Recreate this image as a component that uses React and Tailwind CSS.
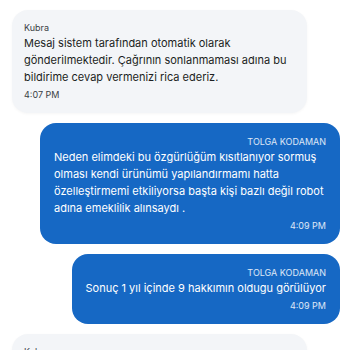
const messages = [
  {
    id: 1,
    mine: false,
    sender: 'Kubra',
    text: 'Mesaj sistem tarafından otomatik olarak gönderilmektedir. Çağrının sonlanmaması adına bu bildirime cevap vermenizi rica ederiz.',
    time: '4:07 PM',
  },
  {
    id: 2,
    mine: true,
    sender: 'TOLGA KODAMAN',
    text: 'Neden elimdeki bu özgürlüğüm kısıtlanıyor sormuş olması kendi ürünümü yapılandırmamı hatta özelleştirmemi etkiliyorsa başta kişi bazlı değil robot adına emeklilik alınsaydı .',
    time: '4:09 PM',
  },
  {
    id: 3,
    mine: true,
    sender: 'TOLGA KODAMAN',
    text: 'Sonuç 1 yıl içinde 9 hakkımın oldugu görülüyor',
    time: '4:09 PM',
  },
  {
    id: 4,
    mine: false,
    sender: 'Kubra',
    text: 'Mesaj sistem tarafından otomatik olarak gönderilmektedir. Çağrının sonlanmaması adına bu bildirime cevap vermenizi rica ederiz.',
    time: '4:10 PM',
  },
];

function Bubble({ msg }) {
  if (msg.mine) {
    return (
      <div className="flex justify-end">
        <div className="max-w-[300px] rounded-2xl bg-[#1668c4] px-[14px] pt-3 pb-[11px] text-white">
          <div className="text-right text-[9px] leading-[14px] text-white/85">{msg.sender}</div>
          <div className="text-[11px] leading-[17px]">{msg.text}</div>
          <div className="mt-[2px] text-right text-[9px] leading-[14px] text-white/85">{msg.time}</div>
        </div>
      </div>
    );
  }
  return (
    <div className="flex justify-start">
      <div className="w-[295px] rounded-2xl bg-[#f3f5f8] px-3 pt-[11px] pb-[11px] shadow-[0_1px_3px_rgba(0,0,0,0.04)]">
        <div className="text-[9px] leading-[14px] text-[#3a3f45]">{msg.sender}</div>
        <div className="text-[11px] leading-[17px] text-[#1c1f23]">{msg.text}</div>
        <div className="mt-[2px] text-[9px] leading-[14px] text-[#3a3f45]">{msg.time}</div>
      </div>
    </div>
  );
}

export default function App() {
  return (
    <div className="h-[350px] overflow-hidden bg-white pt-[10px] pl-3 pr-[10px] font-['Inter',sans-serif]">
      <div className="flex flex-col gap-[10px]">
        {messages.map((m) => (
          <Bubble key={m.id} msg={m} />
        ))}
      </div>
    </div>
  );
}
